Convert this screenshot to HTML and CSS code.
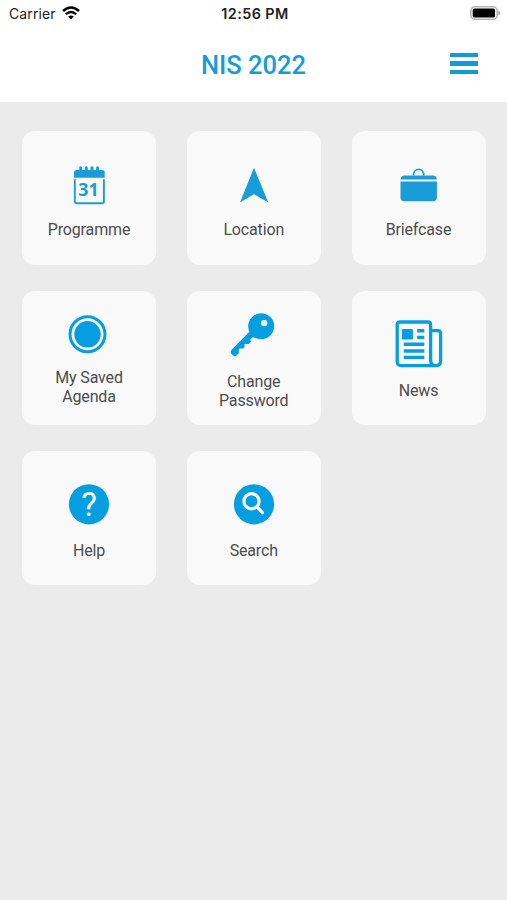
FILE: index.html
```
<!DOCTYPE html>
<html lang="en">
<head>
    <meta charset="UTF-8">
    <meta name="viewport" content="width=device-width, initial-scale=1.0">
    <title>NIS 2022</title>
    <link rel="stylesheet" href="styles.css">
</head>
<body>

    <div class="status-bar">
        <div class="carrier">
            <span>Carrier</span>
            <svg class="wifi" width="18" height="14" viewBox="0 0 18 14">
                <path d="M1 5 Q9 -2 17 5" fill="none" stroke="#000" stroke-width="2.6"/>
                <path d="M3.8 8.1 Q9 3.7 14.2 8.1" fill="none" stroke="#000" stroke-width="2.4"/>
                <path d="M6.2 10.6 Q9 8.4 11.8 10.6 L9 13.6 Z" fill="#000"/>
            </svg>
        </div>
        <div class="time">12:56 PM</div>
        <svg class="battery" width="31" height="14" viewBox="0 0 31 14">
            <rect x="0.8" y="0.8" width="26.4" height="12.4" rx="4" fill="#fff" stroke="#b4b4b4" stroke-width="1.6"/>
            <rect x="2.7" y="2.4" width="22.3" height="9.2" rx="1.6" fill="#000"/>
            <path d="M28.4 4.8 Q30.4 5.6 30.4 7 Q30.4 8.4 28.4 9.2 Z" fill="#999"/>
        </svg>
    </div>

    <header class="header">
        <h1>NIS 2022</h1>
        <button class="menu" aria-label="Menu">
            <span></span>
            <span></span>
            <span></span>
        </button>
    </header>

    <main class="grid">
        <a class="card">
            <svg class="icon light" viewBox="0 0 48 48">
                <path d="M9 16.8 V11.5 Q9 9 11.5 9 H37.2 Q39.7 9 39.7 11.5 V16.8 Z"/>
                <path class="line" d="M15.7 6.7 V11 M21.3 6.7 V11 M27 6.7 V11 M32.6 6.7 V11" stroke-width="3" stroke-linecap="round"/>
                <path class="line" d="M9.8 18.2 V40.4 Q9.8 42.2 11.6 42.2 H37.1 Q38.9 42.2 38.9 40.4 V18.2" stroke-width="1.9"/>
                <text class="day" x="13.2" y="34.8" textLength="20.5" lengthAdjust="spacingAndGlyphs">31</text>
            </svg>
            <span class="label">Programme</span>
        </a>

        <a class="card">
            <svg class="icon light" viewBox="0 0 48 48">
                <path d="M24 6.7 L38.3 41.4 L24 33.2 L10 41.4 Z"/>
            </svg>
            <span class="label">Location</span>
        </a>

        <a class="card">
            <svg class="icon light" viewBox="0 0 48 48">
                <path class="line" d="M18.5 14.5 C18.5 6.3 28.8 6.3 28.8 14.5" stroke-width="1.7"/>
                <path d="M5.5 18.6 Q5.8 14.6 9.6 14.6 H37.8 Q41.6 14.6 41.9 18.6 Z"/>
                <path d="M5.5 20.4 H41.9 V36.4 Q41.9 40.2 38 40.2 H9.4 Q5.5 40.2 5.5 36.4 Z"/>
            </svg>
            <span class="label">Briefcase</span>
        </a>

        <a class="card saved">
            <svg class="icon" viewBox="0 0 48 48">
                <circle class="line" cx="22.5" cy="24.3" r="17.5" stroke-width="3"/>
                <circle cx="22.5" cy="24.3" r="13.2"/>
            </svg>
            <span class="label">My Saved<br>Agenda</span>
        </a>

        <a class="card password">
            <svg class="icon" viewBox="0 0 48 48">
                <path d="M19.4 20.7 L1.4 39 Q0.2 40.4 1 42.4 L3.5 44.8 Q5 45.8 6.2 44.8 L8.8 42.2 V38.2 Q9 37.3 10 37.6 L13.2 37.6 L14.6 36.2 V33.6 Q14.8 32.6 16 32.9 L18.8 32.9 L21 30.7 L20.2 28.8 L22.2 26.6 L26 26.5 Z"/>
                <circle cx="31.2" cy="15.3" r="13"/>
                <circle class="hole" cx="34.2" cy="12.1" r="3.2"/>
            </svg>
            <span class="label">Change<br>Password</span>
        </a>

        <a class="card news">
            <svg class="icon" viewBox="0 0 48 48">
                <path class="line" d="M41 45.6 H6.2 Q2.2 45.6 2.2 41.6 V4.6 Q2.2 2 4.8 2 H33 Q35.6 2 35.6 4.6 V40 Q35.6 45.6 40.7 45.6 Q45.6 45.6 45.6 40.7 V13.2 Q45.6 10.7 43 10.7 H36" stroke-width="3.3"/>
                <rect x="6.9" y="9" width="11" height="10.4" rx="1"/>
                <path class="line" d="M22.2 10.8 H29.3 M22.2 17.4 H29.3 M8.8 24.3 H29.3 M8.8 31 H29.3 M8.8 37.4 H29.3" stroke-width="3.4"/>
            </svg>
            <span class="label">News</span>
        </a>

        <a class="card help">
            <svg class="icon" viewBox="0 0 48 48">
                <circle cx="24" cy="24.3" r="20.1"/>
                <text class="question" x="24" y="35.8" text-anchor="middle">?</text>
            </svg>
            <span class="label">Help</span>
        </a>

        <a class="card help">
            <svg class="icon" viewBox="0 0 48 48">
                <circle cx="24" cy="24.3" r="20.1"/>
                <circle class="glass" cx="21.5" cy="21.2" r="7.6"/>
                <path class="glass" d="M27 26.9 L32.4 32.6" stroke-linecap="round"/>
            </svg>
            <span class="label">Search</span>
        </a>
    </main>

</body>
</html>
```

FILE: styles.css
```
* {
    box-sizing: border-box;
}

body {
    font-family: Roboto, "Liberation Sans", sans-serif;
    background-color: #ebebeb;
    margin: 0;
    min-height: 100vh;
}

.status-bar {
    display: grid;
    grid-template-columns: 1fr auto 1fr;
    align-items: center;
    height: 28px;
    padding: 0 6px 1px 9px;
    background-color: #fff;
    font-family: Inter, sans-serif;
    font-size: 14px;
    color: #222;
}

.carrier {
    display: flex;
    align-items: center;
    gap: 6px;
    letter-spacing: 0.1px;
}

.wifi {
    margin-bottom: 1px;
}

.time {
    font-weight: 600;
    font-size: 14.4px;
    letter-spacing: 0.4px;
}

.battery {
    justify-self: end;
    margin-bottom: 1px;
}

.header {
    display: grid;
    grid-template-columns: 1fr auto 1fr;
    align-items: center;
    height: 74px;
    padding: 0 29px;
    background-color: #fff;
}

h1 {
    grid-column: 2;
    margin: 0;
    font-size: 25.5px;
    font-weight: 500;
    line-height: 74px;
    color: #149dda;
}

.menu {
    justify-self: end;
    display: flex;
    flex-direction: column;
    gap: 4.5px;
    width: 28px;
    margin-bottom: 3px;
    padding: 0;
    border: none;
    background: none;
}

.menu span {
    height: 4.3px;
    background-color: #0f9bd9;
}

.grid {
    display: grid;
    grid-template-columns: repeat(3, 134px);
    grid-auto-rows: 134px;
    justify-content: space-between;
    row-gap: 26px;
    padding: 29px 21.5px 0 22px;
}

.card {
    display: flex;
    flex-direction: column;
    align-items: center;
    gap: 11px;
    padding-top: 30px;
    border-radius: 13px;
    background-color: #f9f9f9;
}

.icon {
    flex: none;
    width: 48px;
    height: 48px;
    fill: #059fe1;
    stroke: none;
}

.icon.light {
    fill: #199cd8;
}

.line {
    fill: none;
    stroke: #059fe1;
}

.light .line {
    stroke: #199cd8;
}

.hole {
    fill: #f9f9f9;
}

.glass {
    fill: none;
    stroke: #fff;
    stroke-width: 3.2;
}

.day {
    font-family: "Open Sans", sans-serif;
    font-size: 18px;
    font-weight: 700;
}

.question {
    font-size: 33px;
    fill: #fff;
}

.label {
    font-size: 16px;
    line-height: 19px;
    letter-spacing: -0.15px;
    text-align: center;
    color: #4d4d4d;
}

.saved {
    padding-top: 19px;
    gap: 10px;
}

.password {
    padding-top: 20px;
    gap: 13px;
}

.news {
    padding-top: 29px;
    gap: 13px;
}

.help {
    padding-top: 29px;
    gap: 13px;
}
```
